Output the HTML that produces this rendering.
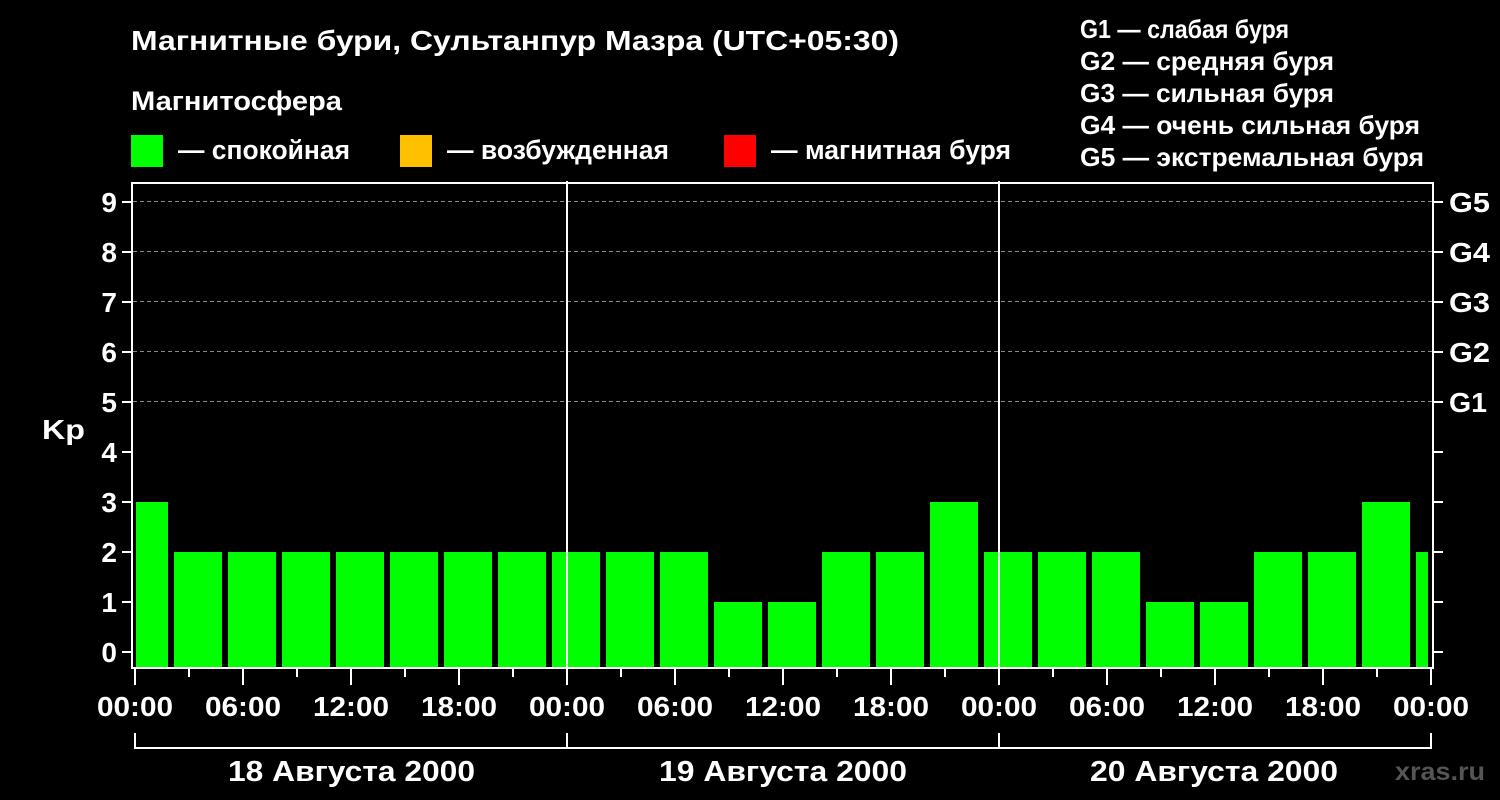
<!DOCTYPE html>
<html><head><meta charset="utf-8"><style>
html,body{margin:0;padding:0;background:#000;}
svg{display:block;}
text{font-family:"Liberation Sans",sans-serif;font-weight:bold;fill:#fff;}
</style></head><body>
<svg width="1500" height="800" viewBox="0 0 1500 800" xmlns="http://www.w3.org/2000/svg">
<rect width="1500" height="800" fill="#000"/>
<text x="131" y="50" font-size="28" textLength="768" lengthAdjust="spacingAndGlyphs">Магнитные бури, Сультанпур Мазра (UTC+05:30)</text>
<text x="131" y="110" font-size="27" textLength="211" lengthAdjust="spacingAndGlyphs">Магнитосфера</text>
<rect x="131" y="135" width="32" height="32" fill="#00ff00"/>
<text x="178" y="159" font-size="27" textLength="172" lengthAdjust="spacingAndGlyphs">— спокойная</text>
<rect x="400" y="135" width="32" height="32" fill="#ffc000"/>
<text x="447" y="159" font-size="27" textLength="222" lengthAdjust="spacingAndGlyphs">— возбужденная</text>
<rect x="724" y="135" width="32" height="32" fill="#ff0000"/>
<text x="771" y="159" font-size="27" textLength="240" lengthAdjust="spacingAndGlyphs">— магнитная буря</text>
<g font-size="26">
<text x="1080" y="38" textLength="209" lengthAdjust="spacingAndGlyphs">G1 — слабая буря</text>
<text x="1080" y="70" textLength="254" lengthAdjust="spacingAndGlyphs">G2 — средняя буря</text>
<text x="1080" y="102" textLength="254" lengthAdjust="spacingAndGlyphs">G3 — сильная буря</text>
<text x="1080" y="134" textLength="340" lengthAdjust="spacingAndGlyphs">G4 — очень сильная буря</text>
<text x="1080" y="166" textLength="344" lengthAdjust="spacingAndGlyphs">G5 — экстремальная буря</text>
</g>
<g stroke="#888" stroke-dasharray="4,3" stroke-width="1">
<line x1="133" y1="201.5" x2="1432" y2="201.5"/>
<line x1="133" y1="251.5" x2="1432" y2="251.5"/>
<line x1="133" y1="301.5" x2="1432" y2="301.5"/>
<line x1="133" y1="351.5" x2="1432" y2="351.5"/>
<line x1="133" y1="401.5" x2="1432" y2="401.5"/>
</g>
<g fill="#00ff00">
<rect x="136" y="502" width="32" height="166"/>
<rect x="174" y="552" width="48" height="116"/>
<rect x="228" y="552" width="48" height="116"/>
<rect x="282" y="552" width="48" height="116"/>
<rect x="336" y="552" width="48" height="116"/>
<rect x="390" y="552" width="48" height="116"/>
<rect x="444" y="552" width="48" height="116"/>
<rect x="498" y="552" width="48" height="116"/>
<rect x="552" y="552" width="48" height="116"/>
<rect x="606" y="552" width="48" height="116"/>
<rect x="660" y="552" width="48" height="116"/>
<rect x="714" y="602" width="48" height="66"/>
<rect x="768" y="602" width="48" height="66"/>
<rect x="822" y="552" width="48" height="116"/>
<rect x="876" y="552" width="48" height="116"/>
<rect x="930" y="502" width="48" height="166"/>
<rect x="984" y="552" width="48" height="116"/>
<rect x="1038" y="552" width="48" height="116"/>
<rect x="1092" y="552" width="48" height="116"/>
<rect x="1146" y="602" width="48" height="66"/>
<rect x="1200" y="602" width="48" height="66"/>
<rect x="1254" y="552" width="48" height="116"/>
<rect x="1308" y="552" width="48" height="116"/>
<rect x="1362" y="502" width="48" height="166"/>
<rect x="1416" y="552" width="12" height="116"/>
</g>
<g stroke="#fff" stroke-width="2" fill="none">
<rect x="132" y="183" width="1301" height="485"/>
<line x1="567" y1="181" x2="567" y2="668"/>
<line x1="999" y1="181" x2="999" y2="668"/>
<line x1="122" y1="652" x2="132" y2="652"/><line x1="122" y1="602" x2="132" y2="602"/>
<line x1="122" y1="552" x2="132" y2="552"/><line x1="122" y1="502" x2="132" y2="502"/>
<line x1="122" y1="452" x2="132" y2="452"/><line x1="122" y1="402" x2="132" y2="402"/>
<line x1="122" y1="352" x2="132" y2="352"/><line x1="122" y1="302" x2="132" y2="302"/>
<line x1="122" y1="252" x2="132" y2="252"/><line x1="122" y1="202" x2="132" y2="202"/>
<line x1="1433" y1="652" x2="1443" y2="652"/><line x1="1433" y1="602" x2="1443" y2="602"/>
<line x1="1433" y1="552" x2="1443" y2="552"/><line x1="1433" y1="502" x2="1443" y2="502"/>
<line x1="1433" y1="452" x2="1443" y2="452"/><line x1="1433" y1="402" x2="1443" y2="402"/>
<line x1="1433" y1="352" x2="1443" y2="352"/><line x1="1433" y1="302" x2="1443" y2="302"/>
<line x1="1433" y1="252" x2="1443" y2="252"/><line x1="1433" y1="202" x2="1443" y2="202"/>
<polyline points="135,733 135,748 1431,748 1431,733"/>
<line x1="567" y1="733" x2="567" y2="748"/>
<line x1="999" y1="733" x2="999" y2="748"/>
</g>
<g stroke="#fff" stroke-width="2">
<line x1="135" y1="668" x2="135" y2="685"/><line x1="189" y1="668" x2="189" y2="677"/>
<line x1="243" y1="668" x2="243" y2="685"/><line x1="297" y1="668" x2="297" y2="677"/>
<line x1="351" y1="668" x2="351" y2="685"/><line x1="405" y1="668" x2="405" y2="677"/>
<line x1="459" y1="668" x2="459" y2="685"/><line x1="513" y1="668" x2="513" y2="677"/>
<line x1="567" y1="668" x2="567" y2="685"/><line x1="621" y1="668" x2="621" y2="677"/>
<line x1="675" y1="668" x2="675" y2="685"/><line x1="729" y1="668" x2="729" y2="677"/>
<line x1="783" y1="668" x2="783" y2="685"/><line x1="837" y1="668" x2="837" y2="677"/>
<line x1="891" y1="668" x2="891" y2="685"/><line x1="945" y1="668" x2="945" y2="677"/>
<line x1="999" y1="668" x2="999" y2="685"/><line x1="1053" y1="668" x2="1053" y2="677"/>
<line x1="1107" y1="668" x2="1107" y2="685"/><line x1="1161" y1="668" x2="1161" y2="677"/>
<line x1="1215" y1="668" x2="1215" y2="685"/><line x1="1269" y1="668" x2="1269" y2="677"/>
<line x1="1323" y1="668" x2="1323" y2="685"/><line x1="1377" y1="668" x2="1377" y2="677"/>
<line x1="1431" y1="668" x2="1431" y2="685"/>
</g>
<g font-size="28" text-anchor="end">
<text x="117" y="662">0</text><text x="117" y="612">1</text><text x="117" y="562">2</text>
<text x="117" y="512">3</text><text x="117" y="462">4</text><text x="117" y="412">5</text>
<text x="117" y="362">6</text><text x="117" y="312">7</text><text x="117" y="262">8</text>
<text x="117" y="212">9</text>
</g>
<text x="42" y="439" font-size="28" textLength="43" lengthAdjust="spacingAndGlyphs">Kp</text>
<g font-size="28">
<text x="1449" y="212" textLength="41" lengthAdjust="spacingAndGlyphs">G5</text><text x="1449" y="262" textLength="41" lengthAdjust="spacingAndGlyphs">G4</text><text x="1449" y="312" textLength="41" lengthAdjust="spacingAndGlyphs">G3</text>
<text x="1449" y="362" textLength="41" lengthAdjust="spacingAndGlyphs">G2</text><text x="1449" y="412" textLength="38" lengthAdjust="spacingAndGlyphs">G1</text>
</g>
<g font-size="28">
<text x="97" y="716" textLength="76" lengthAdjust="spacingAndGlyphs">00:00</text>
<text x="205" y="716" textLength="76" lengthAdjust="spacingAndGlyphs">06:00</text>
<text x="313" y="716" textLength="76" lengthAdjust="spacingAndGlyphs">12:00</text>
<text x="421" y="716" textLength="76" lengthAdjust="spacingAndGlyphs">18:00</text>
<text x="529" y="716" textLength="76" lengthAdjust="spacingAndGlyphs">00:00</text>
<text x="637" y="716" textLength="76" lengthAdjust="spacingAndGlyphs">06:00</text>
<text x="745" y="716" textLength="76" lengthAdjust="spacingAndGlyphs">12:00</text>
<text x="853" y="716" textLength="76" lengthAdjust="spacingAndGlyphs">18:00</text>
<text x="961" y="716" textLength="76" lengthAdjust="spacingAndGlyphs">00:00</text>
<text x="1069" y="716" textLength="76" lengthAdjust="spacingAndGlyphs">06:00</text>
<text x="1177" y="716" textLength="76" lengthAdjust="spacingAndGlyphs">12:00</text>
<text x="1285" y="716" textLength="76" lengthAdjust="spacingAndGlyphs">18:00</text>
<text x="1393" y="716" textLength="76" lengthAdjust="spacingAndGlyphs">00:00</text>
</g>
<g font-size="29">
<text x="228" y="781" textLength="247" lengthAdjust="spacingAndGlyphs">18 Августа 2000</text>
<text x="659" y="781" textLength="248" lengthAdjust="spacingAndGlyphs">19 Августа 2000</text>
<text x="1090" y="781" textLength="248" lengthAdjust="spacingAndGlyphs">20 Августа 2000</text>
</g>
<text x="1395" y="780" font-size="25" style="fill:#555" textLength="90" lengthAdjust="spacingAndGlyphs">xras.ru</text>
</svg>
</body></html>
